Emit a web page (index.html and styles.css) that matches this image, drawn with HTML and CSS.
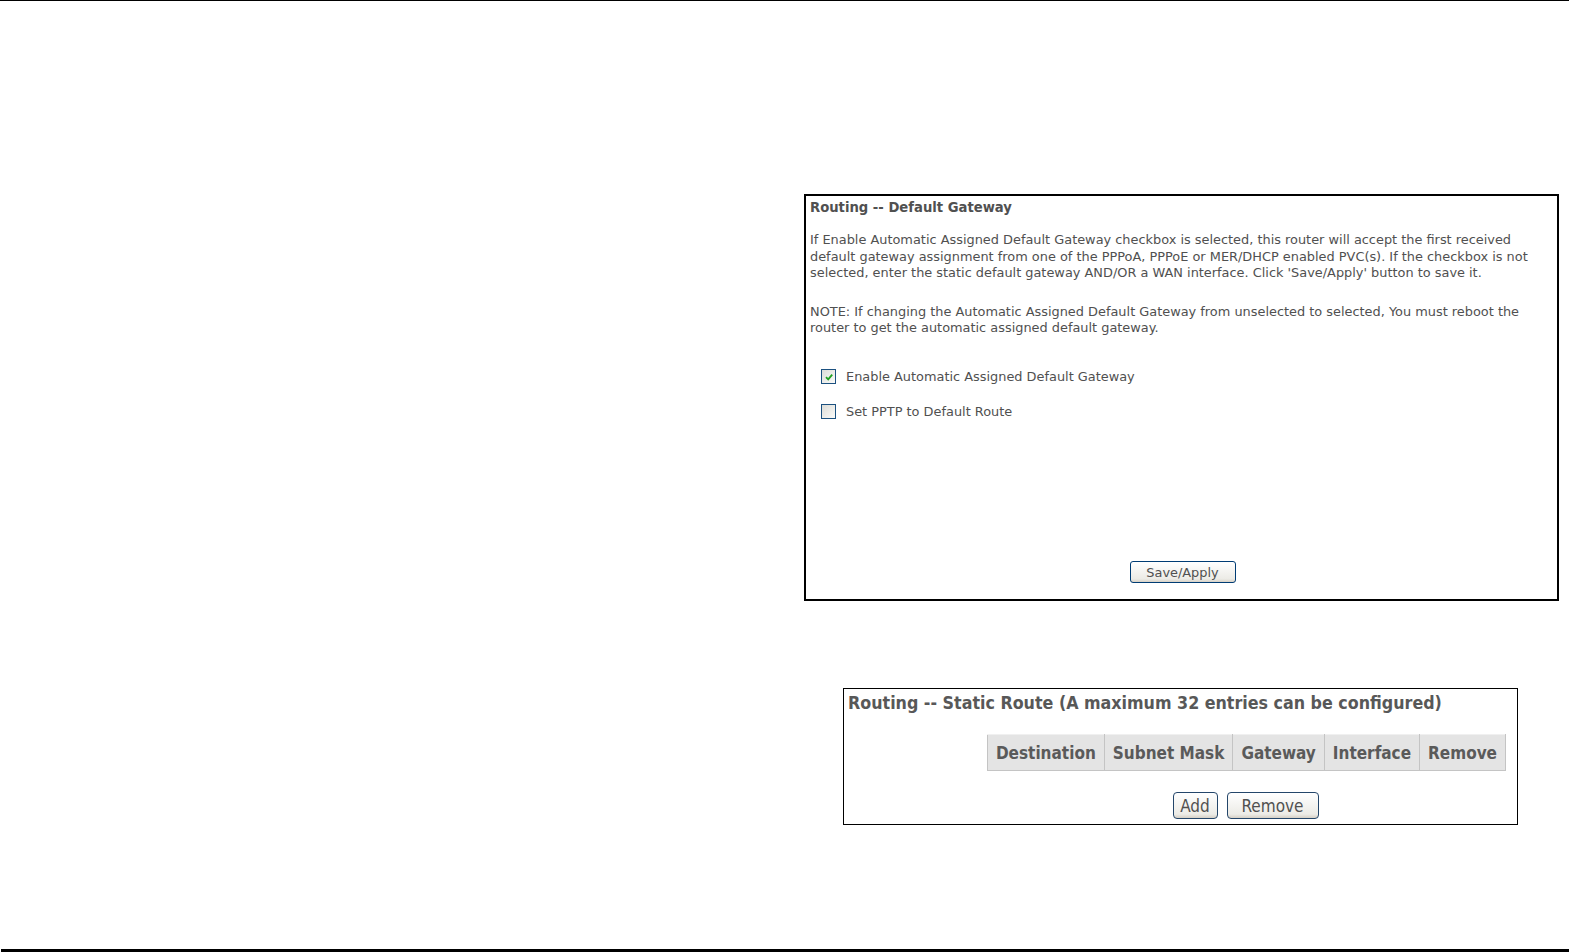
FILE: index.html
```html
<!DOCTYPE html>
<html>
<head>
<meta charset="utf-8">
<link rel="stylesheet" href="styles.css">
</head>
<body>
<div class="page">
  <div class="top-rule"></div>
  <div class="content">
    <section class="panel gateway">
      <div class="title">Routing -- Default Gateway</div>
      <p class="para">If Enable Automatic Assigned Default Gateway checkbox is selected, this router will accept the first received<br>default gateway assignment from one of the PPPoA, PPPoE or MER/DHCP enabled PVC(s). If the checkbox is not<br>selected, enter the static default gateway AND/OR a WAN interface. Click 'Save/Apply' button to save it.</p>
      <p class="para note">NOTE: If changing the Automatic Assigned Default Gateway from unselected to selected, You must reboot the<br>router to get the automatic assigned default gateway.</p>
      <div class="check-row first">
        <span class="cb checked"><svg viewBox="0 0 10 10" width="10" height="10"><path d="M2 5.2 L4.2 7.4 L8.2 2.6" fill="none" stroke="#21a121" stroke-width="1.8"/></svg></span>
        <span class="cb-label">Enable Automatic Assigned Default Gateway</span>
      </div>
      <div class="check-row">
        <span class="cb"></span>
        <span class="cb-label">Set PPTP to Default Route</span>
      </div>
      <div class="spacer"></div>
      <div class="btn-row"><span class="btn save">Save/Apply</span></div>
    </section>

    <section class="panel static">
      <div class="title2">Routing -- Static Route (A maximum 32 entries can be configured)</div>
      <div class="table-wrap">
        <table class="routes">
          <tr><th>Destination</th><th>Subnet Mask</th><th>Gateway</th><th>Interface</th><th>Remove</th></tr>
        </table>
      </div>
      <div class="btn-row2"><span class="btn big add">Add</span><span class="btn big remove">Remove</span></div>
    </section>
  </div>
  <div class="bottom-rule"></div>
</div>
</body>
</html>
```
FILE: styles.css
```css
html, body {
  margin: 0;
  padding: 0;
  background: #ffffff;
}
.page {
  width: 1569px;
  height: 952px;
  display: flex;
  flex-direction: column;
  font-family: "DejaVu Sans", sans-serif;
  color: #505050;
}
.top-rule {
  height: 1px;
  background: #000;
}
.content {
  flex: 1;
  display: flex;
  flex-direction: column;
  align-items: flex-start;
}
.panel {
  box-sizing: border-box;
  background: #fff;
  display: flex;
  flex-direction: column;
}
.gateway {
  margin-top: 193px;
  margin-left: 804px;
  width: 755px;
  height: 407px;
  border: 2px solid #000;
  padding: 3px 4px 0 4px;
  font-size: 12.9px;
  white-space: nowrap;
}
.title {
  font-weight: bold;
  font-size: 13.2px;
  line-height: 17px;
  margin: 0;
}
.para {
  margin: 16px 0 0 0;
  line-height: 16.5px;
}
.note { margin-top: 22px; }
.check-row {
  display: flex;
  align-items: center;
  gap: 10px;
  margin-left: 11px;
  height: 18px;
}
.check-row.first { margin-top: 31px; margin-bottom: 17px; }
.cb {
  box-sizing: border-box;
  width: 15px;
  height: 15px;
  border: 1px solid #1c5180;
  background: linear-gradient(135deg, #dcdcd7, #fbfbf9);
  display: flex;
  align-items: center;
  justify-content: center;
}
.cb-label { line-height: 18px; }
.spacer { flex: 1; }
.btn-row {
  display: flex;
  justify-content: center;
  margin-bottom: 16px;
}
.btn {
  box-sizing: border-box;
  display: inline-flex;
  align-items: center;
  justify-content: center;
  border: 1px solid #003c74;
  border-radius: 3px;
  background: linear-gradient(#ffffff, #ecebe6 85%, #d6d0c5);
  color: #505050;
}
.save {
  width: 106px;
  height: 22px;
  font-size: 12.9px;
  margin-left: 2px;
}
.static {
  margin-top: 87px;
  margin-left: 843px;
  width: 675px;
  height: 137px;
  border: 1px solid #000;
  padding: 3px 4px 0 4px;
  font-family: "DejaVu Sans Condensed", "DejaVu Sans", sans-serif;
  font-stretch: condensed;
}
.title2 {
  font-weight: bold;
  font-size: 17.7px;
  line-height: 22px;
  color: #585858;
}
.table-wrap {
  display: flex;
  justify-content: flex-end;
  margin-top: 20px;
  padding-right: 7px;
}
.routes {
  border-collapse: collapse;
  border: 1px solid #c8c8c8;
}
.routes th {
  background: #e4e4e4;
  border: 1px solid #c4c4c4;
  border-top-color: #f0f0f0;
  font-size: 17px;
  font-weight: bold;
  color: #5a5a5a;
  height: 35px;
  padding: 0 8px;
}
.btn-row2 {
  display: flex;
  justify-content: center;
  gap: 9px;
  margin-top: 21px;
  padding-left: 130px;
}
.big {
  height: 27px;
  font-size: 17px;
  border-radius: 4px;
  border-color: #24466a;
}
.add { width: 45px; }
.remove { width: 92px; }
.bottom-rule {
  height: 3px;
  background: #000;
  margin-left: 1px;
}
```
